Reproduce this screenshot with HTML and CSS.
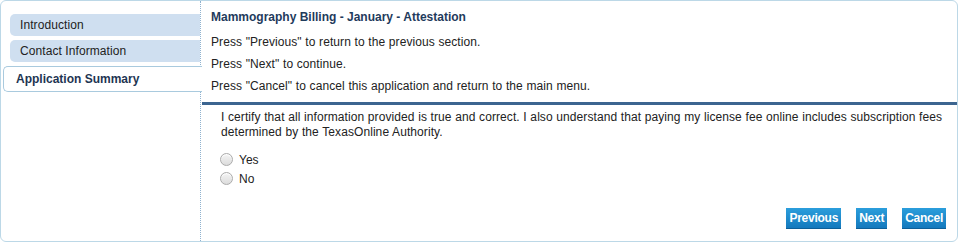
FILE: index.html
```html
<!DOCTYPE html>
<html>
<head>
<meta charset="utf-8">
<link rel="stylesheet" href="styles.css">
</head>
<body>
<div class="wrap">
  <div class="sidebar">
    <div class="tab">Introduction</div>
    <div class="tab">Contact Information</div>
    <div class="tab active">Application Summary</div>
  </div>
  <div class="main">
    <div class="head">
      <div class="title">Mammography Billing - January - Attestation</div>
      <div class="line first">Press "Previous" to return to the previous section.</div>
      <div class="line">Press "Next" to continue.</div>
      <div class="line">Press "Cancel" to cancel this application and return to the main menu.</div>
    </div>
    <div class="bar"></div>
    <div class="body">
      <p class="cert">I certify that all information provided is true and correct. I also understand that paying my license fee online includes subscription fees determined by the TexasOnline Authority.</p>
      <label class="opt"><span class="radio"></span>Yes</label>
      <label class="opt"><span class="radio"></span>No</label>
      <div class="buttons">
        <span class="btn">Previous</span>
        <span class="btn">Next</span>
        <span class="btn">Cancel</span>
      </div>
    </div>
  </div>
</div>
</body>
</html>
```
FILE: styles.css
```css
html, body {
  margin: 0;
  padding: 0;
  background: #ffffff;
}
body {
  font-family: "Liberation Sans", Arial, sans-serif;
  font-size: 12px;
  color: #222;
}
.wrap {
  width: 956px;
  height: 240px;
  border: 1px solid #bcd8e7;
  border-radius: 6px;
  display: flex;
}
.sidebar {
  width: 199px;
  border-right: 1px dotted #8fb2cf;
  padding-top: 13px;
  box-sizing: content-box;
}
.tab {
  margin-left: 9px;
  height: 22px;
  line-height: 22px;
  padding-left: 10px;
  background: #cfdff0;
  border-radius: 5px 0 0 5px;
  margin-bottom: 4px;
  color: #222;
  letter-spacing: 0.08px;
}
.tab.active {
  margin-left: 2px;
  margin-right: -2px;
  height: 24px;
  line-height: 24px;
  padding-left: 12px;
  background: #fff;
  border: 1px solid #a9cade;
  border-right: none;
  font-weight: bold;
  color: #1e3552;
  letter-spacing: 0;
}
.main {
  flex: 1;
  display: flex;
  flex-direction: column;
}
.head {
  padding: 9px 0 0 10px;
  height: 92px;
  box-sizing: border-box;
}
.title {
  font-weight: bold;
  color: #1f3b5c;
  line-height: 15px;
}
.line {
  line-height: 15px;
  margin-top: 7px;
  letter-spacing: 0.08px;
  word-spacing: 0.2px;
}
.line.first {
  margin-top: 10px;
}
.bar {
  height: 3px;
  background: #3c6590;
  margin: 9px 0 0 1px;
}
.body {
  padding: 5px 11px 0 20px;
  display: flex;
  flex-direction: column;
}
.cert {
  margin: 0;
  line-height: 15px;
  color: #222;
  letter-spacing: 0.08px;
  word-spacing: 0.2px;
}
.opt {
  display: flex;
  align-items: center;
  height: 19px;
  line-height: 19px;
  color: #222;
}
.opt:first-of-type {
  margin-top: 11px;
}
.radio {
  width: 11px;
  height: 11px;
  border: 1px solid #ababab;
  border-radius: 50%;
  background: linear-gradient(#f4f4f4, #dcdcdc);
  margin: 0 6px 2px -1px;
  box-shadow: inset 0 1px 1px #fff;
}
.buttons {
  display: flex;
  justify-content: flex-end;
  gap: 15px;
  margin-top: 19px;
}
.btn {
  height: 21px;
  line-height: 21px;
  padding: 0 3px;
  color: #fff;
  font-weight: bold;
  letter-spacing: -0.25px;
  background: linear-gradient(#2b9edc, #1479bd);
  border-bottom: 1px solid #0d5f98;
  box-sizing: border-box;
}
```
